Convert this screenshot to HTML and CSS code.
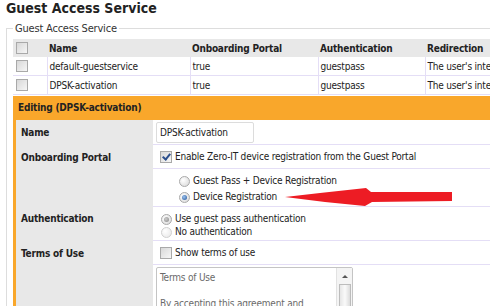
FILE: index.html
```html
<!DOCTYPE html>
<html>
<head>
    <title>Guest Access Service</title>
    <link rel="stylesheet" href="styles.css">
</head>
<body>
    <h1 class="page-title">Guest Access Service</h1>

    <fieldset class="service-box">
        <legend>Guest Access Service</legend>

        <table class="service-list">
            <colgroup>
                <col class="c-check">
                <col class="c-name">
                <col class="c-portal">
                <col class="c-auth">
                <col class="c-redirect">
            </colgroup>
            <thead>
                <tr>
                    <th><span class="checkbox"></span></th>
                    <th>Name</th>
                    <th>Onboarding Portal</th>
                    <th>Authentication</th>
                    <th>Redirection</th>
                </tr>
            </thead>
            <tbody>
                <tr>
                    <td><span class="checkbox"></span></td>
                    <td>default-guestservice</td>
                    <td>true</td>
                    <td>guestpass</td>
                    <td>The user's intended page</td>
                </tr>
                <tr>
                    <td><span class="checkbox"></span></td>
                    <td>DPSK-activation</td>
                    <td>true</td>
                    <td>guestpass</td>
                    <td>The user's intended page</td>
                </tr>
            </tbody>
        </table>

        <div class="edit-panel">
            <div class="edit-head">Editing (DPSK-activation)</div>
            <div class="edit-body">
                <div class="label row-name">Name</div>
                <div class="value row-name">
                    <div class="text-input">DPSK-activation</div>
                </div>

                <div class="label row-check">Onboarding Portal</div>
                <div class="value row-check">
                    <span class="checkbox checked"></span>
                    <span>Enable Zero-IT device registration from the Guest Portal</span>
                </div>

                <div class="label"></div>
                <div class="value row-portal">
                    <div class="option"><span class="radio"></span>Guest Pass + Device Registration</div>
                    <div class="option"><span class="radio on"></span>Device Registration</div>
                </div>

                <div class="label row-auth">Authentication</div>
                <div class="value row-auth">
                    <div class="option"><span class="radio grey-on"></span>Use guest pass authentication</div>
                    <div class="option"><span class="radio faded"></span>No authentication</div>
                </div>

                <div class="label row-check">Terms of Use</div>
                <div class="value row-check">
                    <span class="checkbox"></span>
                    <span>Show terms of use</span>
                </div>

                <div class="label"></div>
                <div class="value row-terms">
                    <div class="terms-box">
                        <div class="terms-text">Terms of Use<br><br>By accepting this agreement and</div>
                        <div class="scrollbar">
                            <span class="scroll-up"></span>
                            <span class="scroll-thumb"></span>
                        </div>
                    </div>
                </div>
            </div>
        </div>
    </fieldset>

    <svg class="arrow" width="490" height="306" viewBox="0 0 490 306">
        <polygon points="285,197 320,193 366,188 371,192 452,192 452,201 372,202 365,206 325,202" fill="#ed1c24"/>
    </svg>
</body>
</html>
```

FILE: styles.css
```css
body {
    margin: 0;
    width: 490px;
    height: 306px;
    overflow: hidden;
    position: relative;
    background-color: #fff;
    color: #222;
    font-family: "DejaVu Sans Condensed", "DejaVu Sans", sans-serif;
    font-size: 10px;
    letter-spacing: -0.2px;
}

.page-title {
    margin: 0 0 0 6px;
    font-size: 14px;
    line-height: 17px;
    font-weight: bold;
    color: #222;
    letter-spacing: 0;
}

.service-box {
    margin: 5px 0 0 6px;
    padding: 4px 0 0 6px;
    border: 1px solid #ddd;
    border-right: none;
    border-bottom: none;
    width: 600px;
    min-width: 0;
}

.service-box legend {
    padding: 0 2px;
    font-size: 11px;
    line-height: 13px;
    color: #333;
}

/* list of services */
.service-list {
    border-collapse: collapse;
    width: 600px;
    table-layout: fixed;
}

.c-check { width: 34px; }
.c-name { width: 143px; }
.c-portal { width: 128px; }
.c-auth { width: 107px; }

.service-list th {
    background-color: #e8e8e8;
    height: 18px;
    padding: 0 2px;
    text-align: left;
    font-weight: bold;
    white-space: nowrap;
}

.service-list td {
    height: 18px;
    padding: 0 2px;
    border-bottom: 1px solid #e4def6;
    border-left: 1px solid #e4def6;
    white-space: nowrap;
    overflow: hidden;
}

.service-list td:first-child {
    border-left: none;
}

.service-list th:first-child,
.service-list td:first-child {
    padding-left: 3px;
}

/* fake form controls */
.checkbox {
    display: inline-block;
    box-sizing: border-box;
    width: 12px;
    height: 12px;
    border: 1px solid #a9a9a9;
    background: linear-gradient(135deg, #d8d8d8, #f6f6f6);
    vertical-align: middle;
    position: relative;
}

.checkbox.checked::after {
    content: "";
    position: absolute;
    left: 3px;
    top: 0px;
    width: 3px;
    height: 6px;
    border: solid #2b4e8c;
    border-width: 0 2px 2px 0;
    transform: rotate(40deg);
}

.radio {
    display: inline-block;
    box-sizing: border-box;
    width: 11px;
    height: 11px;
    border-radius: 50%;
    border: 1px solid #a9a9a9;
    background: radial-gradient(circle at 35% 35%, #fff, #d6d6d6);
    vertical-align: middle;
    position: relative;
    margin-right: 3px;
}

.radio.on::after,
.radio.grey-on::after {
    content: "";
    position: absolute;
    left: 2px;
    top: 2px;
    width: 5px;
    height: 5px;
    border-radius: 50%;
    background: radial-gradient(circle at 40% 40%, #9cc4f0, #1f4f94);
}

.radio.grey-on::after {
    background: radial-gradient(circle at 40% 40%, #ccc, #888);
}

.radio.faded {
    border-color: #d0d0d0;
    background: radial-gradient(circle at 35% 35%, #fff, #e6e6e6);
}

/* editing panel */
.edit-panel {
    margin-top: 1px;
    width: 600px;
}

.edit-head {
    background-color: #f9a72b;
    height: 24px;
    line-height: 24px;
    padding-left: 5px;
    font-weight: bold;
}

.edit-body {
    display: grid;
    grid-template-columns: 137px 1fr;
    border-left: 3px solid #f9a72b;
}

.label {
    background-color: #e8e8e8;
    padding-left: 5px;
    font-weight: bold;
    display: flex;
    align-items: center;
}

.value {
    border-bottom: 1px solid #e4def6;
    padding-left: 3px;
}

.value.row-name {
    padding-top: 2px;
    padding-bottom: 1px;
}

.text-input {
    box-sizing: border-box;
    width: 98px;
    height: 21px;
    line-height: 19px;
    padding-left: 3px;
    border: 1px solid #dcdcdc;
    border-radius: 2px;
}

.value.row-check {
    height: 23px;
    display: flex;
    align-items: center;
    padding-left: 7px;
    gap: 3px;
}

.value.row-portal {
    padding: 4px 0 1px 26px;
}

.row-portal .option {
    line-height: 16px;
    height: 16px;
}

.label.row-auth {
    align-items: flex-start;
    padding-top: 5px;
    line-height: 13px;
}

.value.row-auth {
    padding: 5px 0 2px 8px;
}

.row-auth .option {
    line-height: 13px;
    height: 13px;
}

.value.row-terms {
    border-bottom: none;
    padding-top: 2px;
    height: 60px;
}

.terms-box {
    display: flex;
    box-sizing: border-box;
    width: 197px;
    height: 60px;
    border: 1px solid #c4c4c4;
    border-radius: 2px;
}

.terms-text {
    flex: 1;
    padding: 3px 3px;
    line-height: 13px;
    color: #6a6a6a;
    white-space: nowrap;
    overflow: hidden;
}

.scrollbar {
    width: 15px;
    border-left: 1px solid #e2e2e2;
    background-color: #f4f4f4;
    display: flex;
    flex-direction: column;
    align-items: center;
}

.scroll-up {
    margin-top: 7px;
    width: 0;
    height: 0;
    border-left: 3px solid transparent;
    border-right: 3px solid transparent;
    border-bottom: 3px solid #555;
}

.scroll-thumb {
    margin-top: 6px;
    box-sizing: border-box;
    width: 12px;
    flex: 1;
    border: 1px solid #bcbcbc;
    border-bottom: none;
    background: linear-gradient(90deg, #e6e6e6, #fafafa 50%, #dcdcdc);
}

.arrow {
    position: absolute;
    left: 0;
    top: 0;
    pointer-events: none;
}
```
